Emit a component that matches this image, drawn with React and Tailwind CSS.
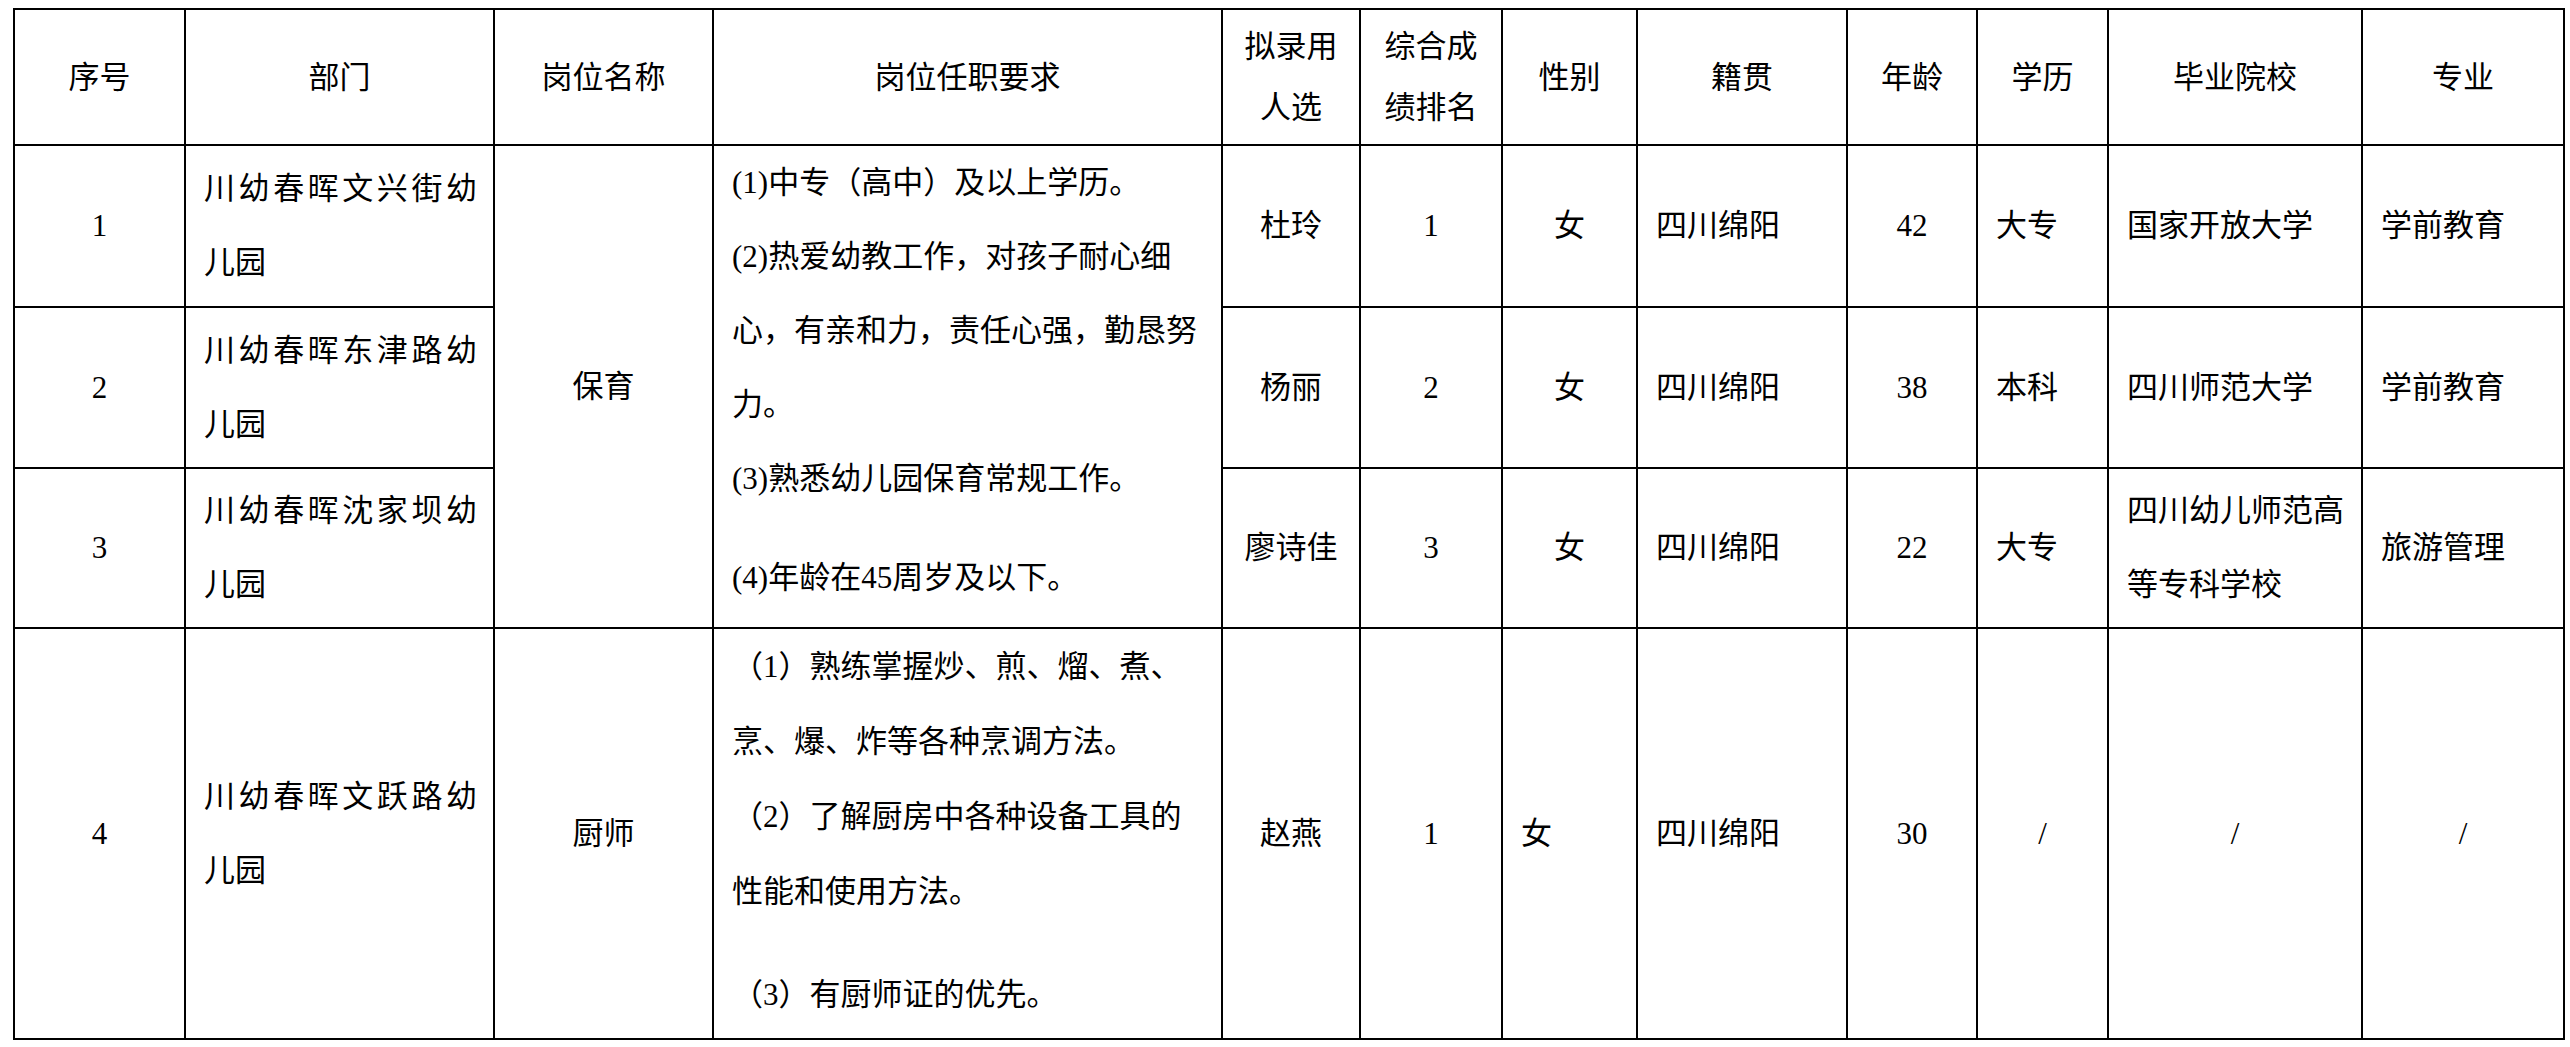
import React from "react";

const base = "border-2 border-black text-[31px] font-normal";
const td = `${base} leading-[74px] align-middle`;
const center = `${td} text-center`;
const left = `${td} text-left pl-[18px]`;
const head = `${base} align-middle text-center leading-[61px]`;

const Dept = ({ first }) => (
    <td className={`${td} text-left pl-[18px] pr-[16px]`}>
        <div className="whitespace-nowrap [text-align-last:justify]">{first}</div>
        <div className="whitespace-nowrap">儿园</div>
    </td>
);

const rows = [
    { no: "1", dept: "川幼春晖文兴街幼", name: "杜玲", rank: "1", age: "42", edu: "大专", school: ["国家开放大学"], major: "学前教育" },
    { no: "2", dept: "川幼春晖东津路幼", name: "杨丽", rank: "2", age: "38", edu: "本科", school: ["四川师范大学"], major: "学前教育" },
    { no: "3", dept: "川幼春晖沈家坝幼", name: "廖诗佳", rank: "3", age: "22", edu: "大专", school: ["四川幼儿师范高", "等专科学校"], major: "旅游管理" },
];

const App = () => {
    return (
        <div
            lang="zh-CN"
            className="min-h-screen bg-white pt-2 pl-[13px] text-black font-['Liberation_Serif','Noto_Sans_CJK_SC',serif]"
        >
            <table className="w-[2552px] table-fixed border-collapse">
                <colgroup>
                    <col className="w-[171px]" />
                    <col className="w-[309px]" />
                    <col className="w-[219px]" />
                    <col className="w-[509px]" />
                    <col className="w-[138px]" />
                    <col className="w-[142px]" />
                    <col className="w-[135px]" />
                    <col className="w-[210px]" />
                    <col className="w-[130px]" />
                    <col className="w-[131px]" />
                    <col className="w-[254px]" />
                    <col className="w-[202px]" />
                </colgroup>
                <thead>
                    <tr className="h-[136px]">
                        <th className={head}>序号</th>
                        <th className={head}>部门</th>
                        <th className={head}>岗位名称</th>
                        <th className={head}>岗位任职要求</th>
                        <th className={head}>拟录用<br />人选</th>
                        <th className={head}>综合成<br />绩排名</th>
                        <th className={head}>性别</th>
                        <th className={head}>籍贯</th>
                        <th className={head}>年龄</th>
                        <th className={head}>学历</th>
                        <th className={head}>毕业院校</th>
                        <th className={head}>专业</th>
                    </tr>
                </thead>
                <tbody>
                    {rows.map((r, i) => (
                        <tr key={r.no} className={i === 0 ? "h-[162px]" : i === 1 ? "h-[161px]" : "h-[160px]"}>
                            <td className={center}>{r.no}</td>
                            <Dept first={r.dept} />
                            {i === 0 && (
                                <>
                                    <td rowSpan={3} className={center}>保育</td>
                                    <td rowSpan={3} className={`${base} leading-[74px] align-top text-left pl-[18px]`}>
                                        <div className="whitespace-nowrap">(1)中专（高中）及以上学历。</div>
                                        <div className="whitespace-nowrap">(2)热爱幼教工作，对孩子耐心细</div>
                                        <div className="whitespace-nowrap">心，有亲和力，责任心强，勤恳努</div>
                                        <div className="whitespace-nowrap">力。</div>
                                        <div className="whitespace-nowrap">(3)熟悉幼儿园保育常规工作。</div>
                                        <div className="whitespace-nowrap mt-[25px]">(4)年龄在45周岁及以下。</div>
                                    </td>
                                </>
                            )}
                            <td className={center}>{r.name}</td>
                            <td className={center}>{r.rank}</td>
                            <td className={center}>女</td>
                            <td className={left}>四川绵阳</td>
                            <td className={center}>{r.age}</td>
                            <td className={left}>{r.edu}</td>
                            <td className={left}>
                                {r.school.map((s) => (
                                    <div key={s} className="whitespace-nowrap">{s}</div>
                                ))}
                            </td>
                            <td className={left}>{r.major}</td>
                        </tr>
                    ))}
                    <tr className="h-[411px]">
                        <td className={center}>4</td>
                        <Dept first="川幼春晖文跃路幼" />
                        <td className={center}>厨师</td>
                        <td className={`${base} leading-[75px] align-top text-left pl-[18px]`}>
                            <div className="whitespace-nowrap">（1）熟练掌握炒、煎、熘、煮、</div>
                            <div className="whitespace-nowrap">烹、爆、炸等各种烹调方法。</div>
                            <div className="whitespace-nowrap">（2）了解厨房中各种设备工具的</div>
                            <div className="whitespace-nowrap">性能和使用方法。</div>
                            <div className="whitespace-nowrap mt-[28px]">（3）有厨师证的优先。</div>
                        </td>
                        <td className={center}>赵燕</td>
                        <td className={center}>1</td>
                        <td className={left}>女</td>
                        <td className={left}>四川绵阳</td>
                        <td className={center}>30</td>
                        <td className={center}>/</td>
                        <td className={center}>/</td>
                        <td className={center}>/</td>
                    </tr>
                </tbody>
            </table>
        </div>
    );
};

export default App;
